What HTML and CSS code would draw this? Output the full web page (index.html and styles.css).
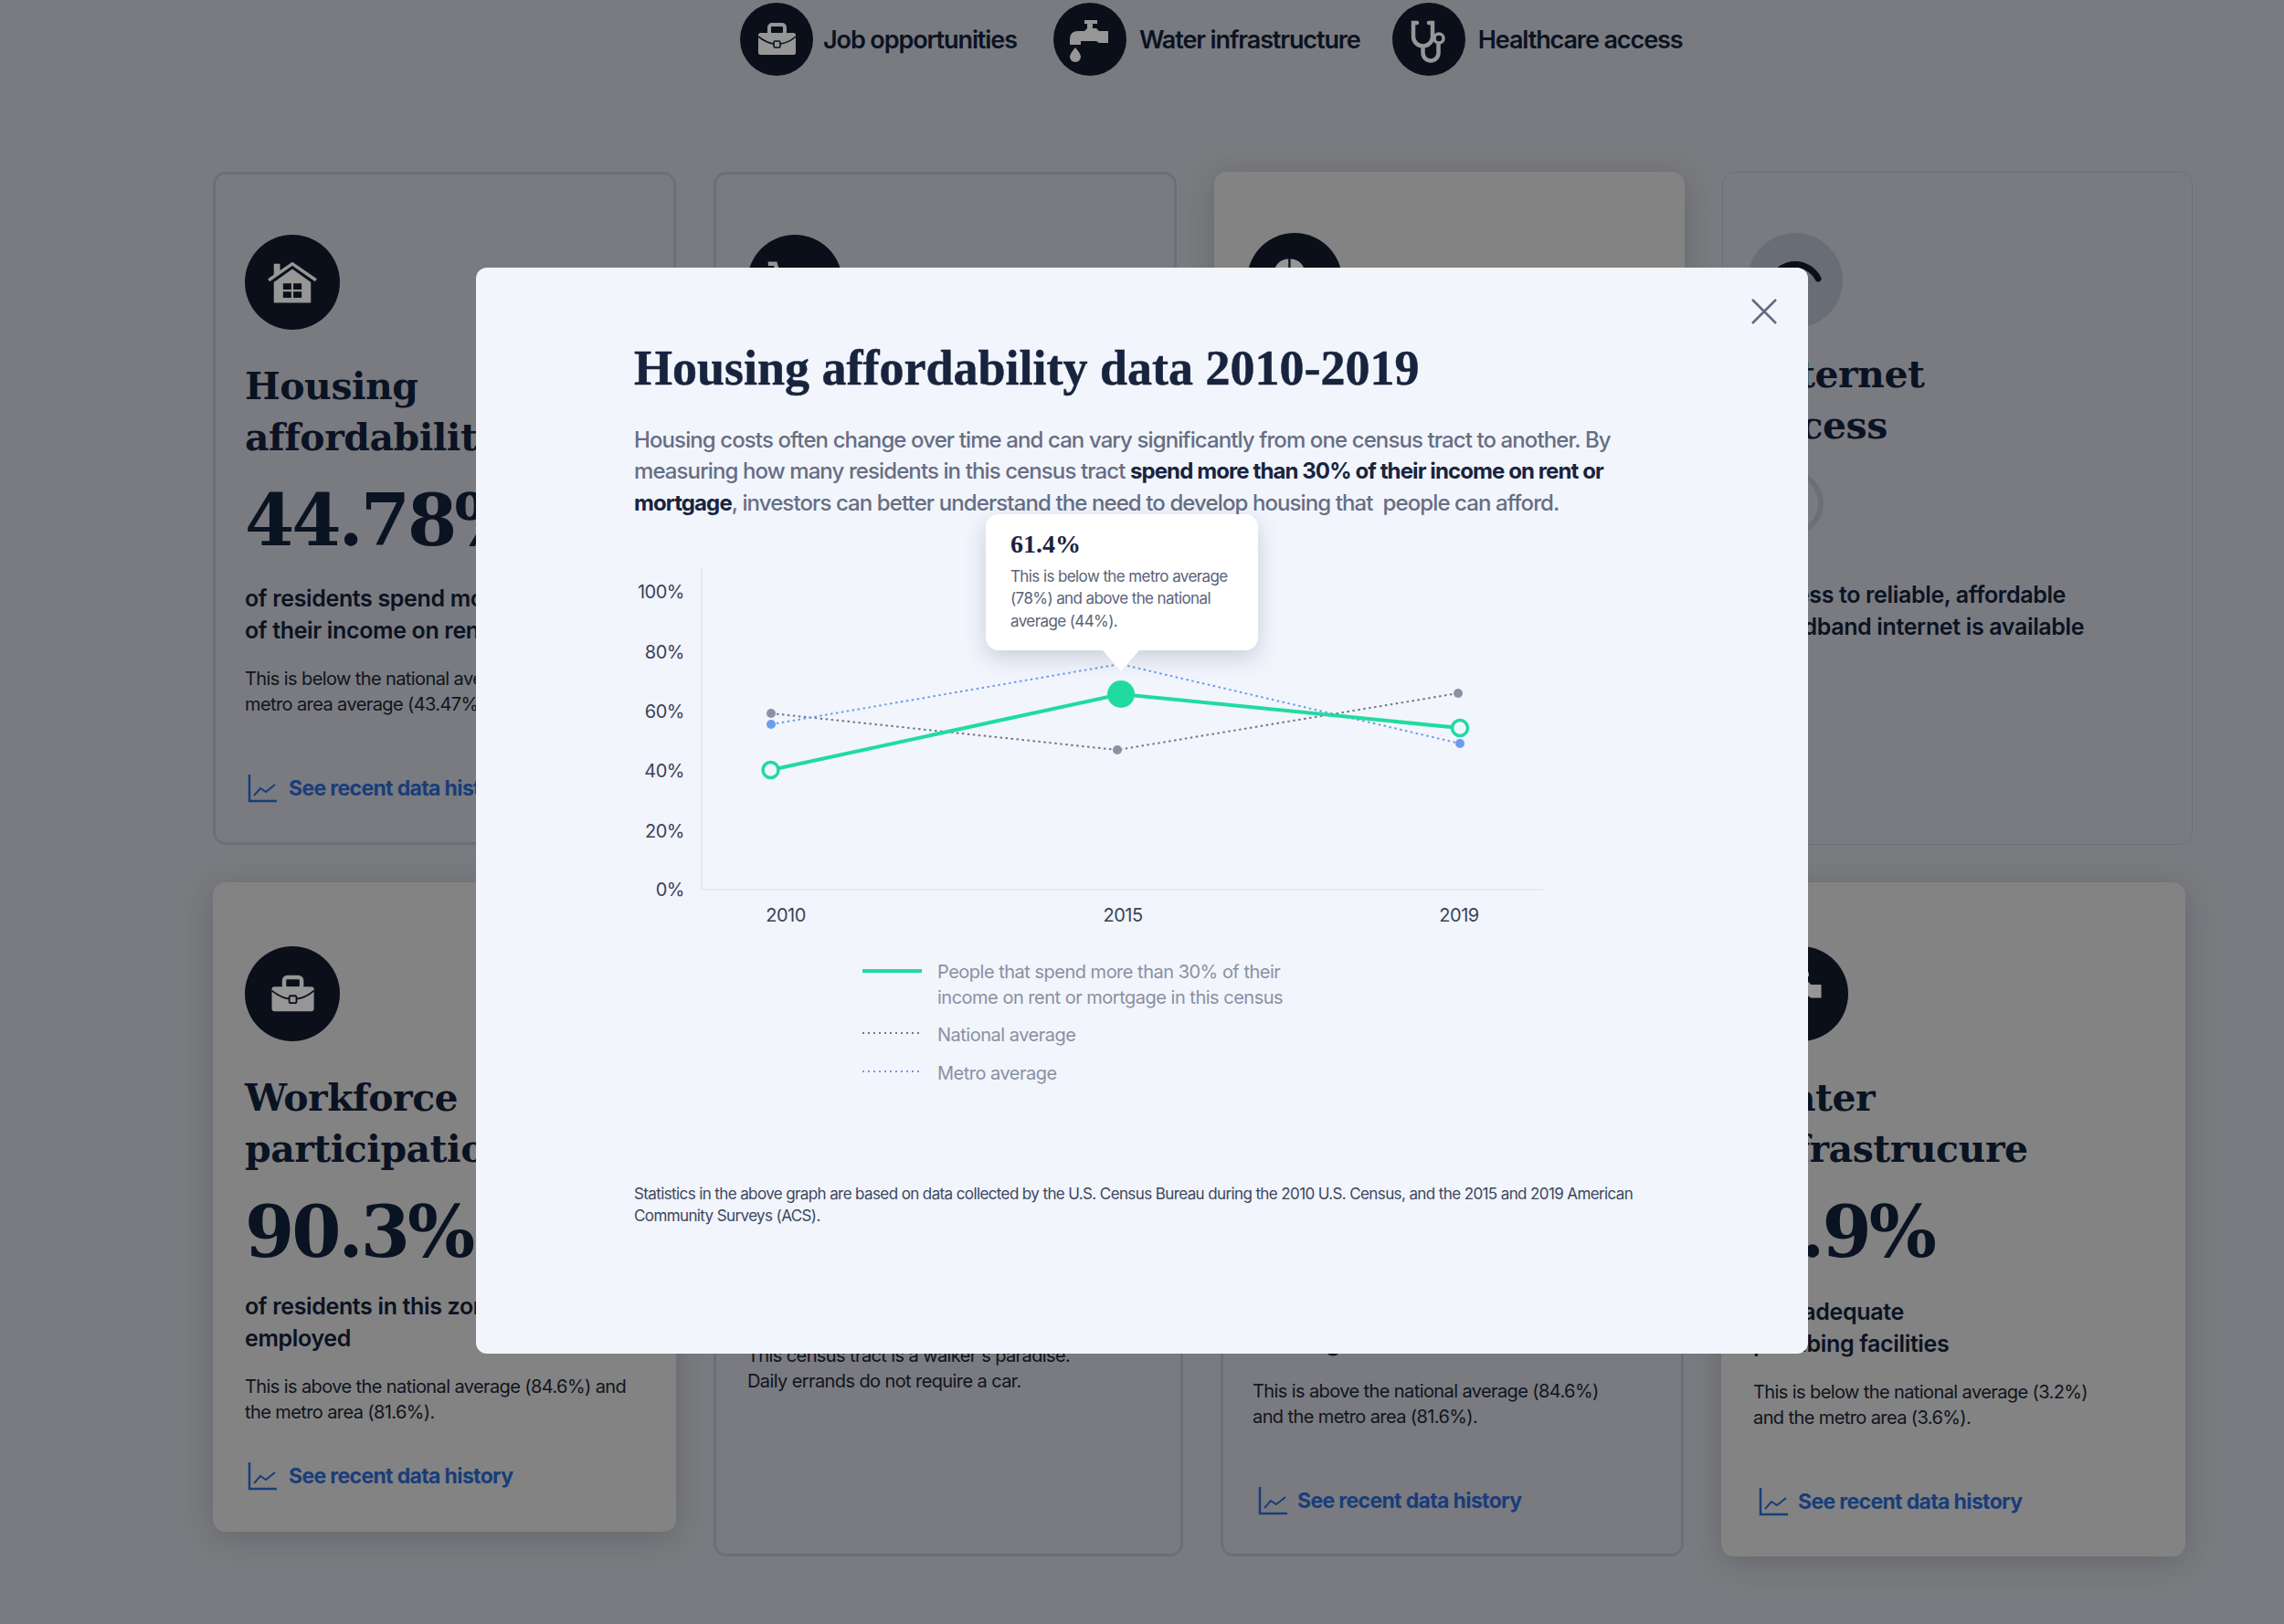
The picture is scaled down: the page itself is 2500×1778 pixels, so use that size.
FILE: index.html
```html
<!DOCTYPE html>
<html lang="en">
<head>
    <meta charset="UTF-8">
    <title>Housing affordability data</title>
    <link rel="stylesheet" href="styles.css">
</head>
<body>
    <svg class="defs" width="0" height="0">
        <symbol id="i-case" viewBox="0 0 80 80">
            <rect x="32" y="24" width="17" height="11" rx="3" fill="none" stroke="currentColor" stroke-width="4"/>
            <rect x="20" y="33" width="41" height="24" rx="2.5" fill="currentColor"/>
            <path d="M20 37q9 7 17 8M44 45q9-1 17-8" fill="none" stroke="#111a2c" stroke-width="1.6"/>
            <rect x="37" y="42" width="7" height="7" rx="1.5" fill="none" stroke="#111a2c" stroke-width="1.6"/>
        </symbol>
        <symbol id="i-tap" viewBox="0 0 80 80">
            <path d="M34 19h14v4h-5v5h4l3 3h10v13H50l-3-2H30v4H18V40q0-9 9-9h7l3-3v-5h-3z" fill="currentColor"/>
            <path d="M24 49q6 7 6 10a6 6 0 0 1-12 0q0-3 6-10z" fill="currentColor"/>
        </symbol>
        <symbol id="i-steth" viewBox="0 0 80 80">
            <path d="M27 22h-4v15a10.500 10.500 0 0 0 21 0V22h-4M33.500 48v7a8.500 8.500 0 0 0 17 0v-9" fill="none" stroke="currentColor" stroke-width="4.500" stroke-linecap="round"/>
            <circle cx="51" cy="39" r="5" fill="none" stroke="currentColor" stroke-width="3.500"/>
        </symbol>
        <symbol id="i-house" viewBox="0 0 80 80">
            <path d="M22 22h6v8l-6 4z" fill="currentColor"/>
            <path d="M17 38l23-16 23 16" fill="none" stroke="currentColor" stroke-width="3"/>
            <path d="M22 40l18-13 18 13v20H22z" fill="currentColor"/>
            <path d="M31 41h8v6h-8zM41 41h8v6h-8zM31 49h8v6h-8zM41 49h8v6h-8z" fill="#111a2c"/>
        </symbol>
        <symbol id="i-cart" viewBox="0 0 80 80">
            <path d="M14 22h7l8 26h28l6-20H26" fill="none" stroke="currentColor" stroke-width="4"/>
            <circle cx="34" cy="57" r="4" fill="currentColor"/>
            <circle cx="54" cy="57" r="4" fill="currentColor"/>
        </symbol>
        <symbol id="i-pie" viewBox="0 0 80 80">
            <path d="M34 19a14 14 0 0 0-14 14h14z" fill="currentColor"/>
            <path d="M36 19a14 14 0 0 1 14 14H36z" fill="currentColor"/>
            <path d="M20 35a14 14 0 0 0 30 0z" fill="currentColor"/>
        </symbol>
        <symbol id="i-trend" viewBox="0 0 32 32">
            <path d="M2 1v29h30" fill="none" stroke="currentColor" stroke-width="2.500"/>
            <path d="M7 24l7-8 6 4 10-8" fill="none" stroke="currentColor" stroke-width="2"/>
        </symbol>
    </svg>

    <div class="page">
        <div class="topics">
            <div class="topic">
                <span class="badge"><svg><use href="#i-case"/></svg></span>
                <span>Job opportunities</span>
            </div>
            <div class="topic">
                <span class="badge"><svg><use href="#i-tap"/></svg></span>
                <span>Water infrastructure</span>
            </div>
            <div class="topic">
                <span class="badge"><svg><use href="#i-steth"/></svg></span>
                <span>Healthcare access</span>
            </div>
        </div>

        <div class="row row-one">
            <div class="card outlined w507">
                <span class="circle"><svg><use href="#i-house"/></svg></span>
                <h2>Housing<br>affordability</h2>
                <div class="stat">44.78%</div>
                <h3>of residents spend more than 30%<br>of their income on rent</h3>
                <p>This is below the national average (44%) and the<br>metro area average (43.47%).</p>
                <a class="history"><svg><use href="#i-trend"/></svg>See recent data history</a>
            </div>
            <div class="card outlined inset w507">
                <span class="circle"><svg><use href="#i-cart"/></svg></span>
            </div>
            <div class="card filled w515">
                <span class="circle up"><svg><use href="#i-pie"/></svg></span>
            </div>
            <div class="card outlined thin w515">
                <span class="circle faded">
                    <svg viewBox="0 0 104 104"><path d="M27 50A28 28 0 0 1 77 50" fill="none" stroke="#111a2c" stroke-width="7" stroke-linecap="round"/></svg>
                </span>
                <h2 class="tight">Internet<br>access</h2>
                <div class="ring"></div>
                <h3 class="after-ring">Access to reliable, affordable<br>broadband internet is available</h3>
            </div>
        </div>

        <div class="row">
            <div class="card filled w507 short">
                <span class="circle"><svg><use href="#i-case"/></svg></span>
                <h2>Workforce<br>participation</h2>
                <div class="stat">90.3%</div>
                <h3>of residents in this zone are<br>employed</h3>
                <p>This is above the national average (84.6%) and<br>the metro area (81.6%).</p>
                <a class="history near"><svg><use href="#i-trend"/></svg>See recent data history</a>
            </div>
            <div class="card outlined inset w514 tall">
                <span class="circle"><svg><use href="#i-cart"/></svg></span>
                <h2>Walkable<br>community</h2>
                <div class="stat">91</div>
                <h3>walk score for this census tract</h3>
                <p>This census tract is a walker's paradise.<br>Daily errands do not require a car.</p>
            </div>
            <div class="card outlined w507 tall">
                <span class="circle"><svg><use href="#i-steth"/></svg></span>
                <h2>Health<br>coverage</h2>
                <div class="stat">90.3%</div>
                <h3>of residents have health<br>coverage</h3>
                <p>This is above the national average (84.6%)<br>and the metro area (81.6%).</p>
                <a class="history"><svg><use href="#i-trend"/></svg>See recent data history</a>
            </div>
            <div class="card filled w508 tall">
                <span class="circle"><svg><use href="#i-tap"/></svg></span>
                <h2>Water<br>infrastrucure</h2>
                <div class="stat">2.9%</div>
                <h3>lack adequate<br>plumbing facilities</h3>
                <p>This is below the national average (3.2%)<br>and the metro area (3.6%).</p>
                <a class="history"><svg><use href="#i-trend"/></svg>See recent data history</a>
            </div>
        </div>
    </div>

    <div class="overlay">
        <div class="modal">
            <svg class="close" viewBox="0 0 28 28"><path d="M1 1l26 26M27 1L1 27" fill="none" stroke="#626b7e" stroke-width="2.500"/></svg>
            <h1>Housing affordability data 2010-2019</h1>
            <p class="intro">Housing costs often change over time and can vary significantly from one census tract to another. By measuring how many residents in this census tract <strong>spend more than 30% of their income on rent or mortgage</strong>, investors can better understand the need to develop housing that&nbsp; people can afford.</p>

            <div class="chart">
                <svg class="plot" viewBox="0 0 1000 410" width="1000" height="410">
                    <path d="M74 12V365H995" fill="none" stroke="#e6eaf3" stroke-width="2"/>
                    <text class="tick" x="55" y="46" text-anchor="end">100%</text>
                    <text class="tick" x="55" y="112" text-anchor="end">80%</text>
                    <text class="tick" x="55" y="177" text-anchor="end">60%</text>
                    <text class="tick" x="55" y="242" text-anchor="end">40%</text>
                    <text class="tick" x="55" y="308" text-anchor="end">20%</text>
                    <text class="tick" x="55" y="372" text-anchor="end">0%</text>
                    <text class="tick" x="166" y="400" text-anchor="middle">2010</text>
                    <text class="tick" x="535" y="400" text-anchor="middle">2015</text>
                    <text class="tick" x="903" y="400" text-anchor="middle">2019</text>

                    <polyline points="150,172 529,212 902,150" fill="none" stroke="#6f778b" stroke-width="2" stroke-dasharray="2.500 3.500"/>
                    <circle cx="150" cy="172" r="5" fill="#8a92a6"/>
                    <circle cx="529" cy="212" r="5" fill="#8a92a6"/>
                    <circle cx="902" cy="150" r="5" fill="#8a92a6"/>

                    <polyline points="150,184 532,118 904,205" fill="none" stroke="#6c9ced" stroke-width="2" stroke-dasharray="2.500 3.500"/>
                    <circle cx="150" cy="184" r="5" fill="#6c9ced"/>
                    <circle cx="904" cy="205" r="5" fill="#6c9ced"/>

                    <polyline points="149.500,234 533,151 904,188" fill="none" stroke="#1fdc9e" stroke-width="4"/>
                    <circle cx="149.500" cy="234" r="8.500" fill="#f2f5fc" stroke="#1fdc9e" stroke-width="3.500"/>
                    <circle cx="533" cy="151" r="15" fill="#1fdc9e"/>
                    <circle cx="904" cy="188" r="8.500" fill="#f2f5fc" stroke="#1fdc9e" stroke-width="3.500"/>
                </svg>
                <div class="tip">
                    <b>61.4%</b>
                    <span>This is below the metro average (78%) and above the national average (44%).</span>
                </div>
            </div>

            <ul class="legend">
                <li><i class="key solid"></i><span>People that spend more than 30% of their<br>income on rent or mortgage in this census</span></li>
                <li><i class="key dots-gray"></i><span>National average</span></li>
                <li><i class="key dots-blue"></i><span>Metro average</span></li>
            </ul>

            <p class="note">Statistics in the above graph are based on data collected by the U.S. Census Bureau during the 2010 U.S. Census, and the 2015 and 2019 American Community Surveys (ACS).</p>
        </div>
    </div>
</body>
</html>
```

FILE: styles.css
```css
body {
    margin: 0;
    background: #cbced5;
    color: #12203a;
    font-family: Inter, "Liberation Sans", sans-serif;
}
.defs {
    position: absolute;
}
.page {
    height: 1778px;
    overflow: hidden;
    box-sizing: border-box;
    padding: 3px 0 0 233px;
}

/* top strip */
.topics {
    display: flex;
    gap: 35px;
    margin-left: 577px;
    height: 185px;
}
.topic {
    display: flex;
    align-items: center;
    gap: 14px;
    height: 80px;
    font-size: 27px;
    font-weight: 600;
    letter-spacing: -1.100px;
}
.topic:first-child {
    gap: 11px;
    margin-right: 5px;
}
.badge {
    width: 80px;
    height: 80px;
    border-radius: 50%;
    background: #111a2c;
    color: #fbfbfb;
}
.badge svg {
    width: 80px;
    height: 80px;
    display: block;
}

/* cards */
.row {
    display: flex;
    align-items: flex-start;
    gap: 41px;
}
.row-one {
    margin-bottom: 41px;
}
.card {
    box-sizing: border-box;
    height: 737px;
    padding: 70px 35px 0;
    border-radius: 14px;
    overflow: hidden;
}
.w507 { width: 507px; }
.w508 { width: 508px; }
.w514 { width: 514px; }
.w515 { width: 515px; }
.short { height: 711px; }
.tall { height: 738px; }
.outlined {
    border: 3px solid #b4bac6;
    padding: 66px 32px 0;
}
.inset {
    padding-left: 34px;
}
.thin {
    border-width: 1px;
    padding-left: 34px;
}
.filled {
    background: #dadada;
    box-shadow: 0 6px 36px rgba(40, 45, 60, 0.22);
}
.circle {
    display: flex;
    align-items: center;
    justify-content: center;
    width: 104px;
    height: 104px;
    border-radius: 50%;
    background: #111a2c;
    color: #fbfbfb;
}
.circle svg {
    width: 90px;
    height: 90px;
}
.up {
    margin: -3px 0 0 1px;
}
.faded {
    background: #afb6c4;
    margin-left: -7px;
}
.faded svg {
    width: 104px;
    height: 104px;
}
.card h2 {
    margin: 34px 0 0;
    font: bold 41px/56px "DejaVu Serif", serif;
    letter-spacing: -0.500px;
}
.card .tight {
    margin-top: 23px;
}
.stat {
    margin-top: 13px;
    font: bold 78px/100px "DejaVu Serif", serif;
    letter-spacing: -3px;
    white-space: nowrap;
}
.card h3 {
    margin: 18px 0 0;
    font-size: 25px;
    line-height: 35px;
    font-weight: 600;
    letter-spacing: -0.350px;
    white-space: nowrap;
}
.short h3 {
    margin-top: 14px;
}
.tall h3 {
    margin-top: 19.500px;
}
.inset h3 {
    margin-top: 15px;
}
.card .after-ring {
    margin-top: 47px;
}
.card p {
    margin: 20.500px 0 0;
    font-size: 20px;
    line-height: 28px;
    color: #1c2433;
    letter-spacing: -0.600px;
    white-space: nowrap;
}
.tall p {
    margin-top: 21.500px;
}
.history {
    display: flex;
    align-items: center;
    gap: 13px;
    margin: 62px 0 0 3px;
    font-size: 23px;
    font-weight: 700;
    letter-spacing: -0.650px;
    color: #2a66cc;
}
.tall .history {
    margin-left: 6px;
    gap: 11px;
}
.near {
    margin-top: 40px;
}
.history svg {
    width: 32px;
    height: 32px;
}
.ring {
    width: 60px;
    height: 60px;
    margin: 21px 0 0 4px;
    border: 6px solid #b3b9c5;
    border-radius: 50%;
}

/* modal */
.overlay {
    position: fixed;
    inset: 0;
    padding-bottom: 3px;
    display: flex;
    align-items: center;
    justify-content: center;
    background: rgba(0, 0, 0, 0.4);
}
.modal {
    position: relative;
    box-sizing: border-box;
    width: 1458px;
    height: 1189px;
    padding: 74px 173px 0;
    background: #f2f5fc;
    border-radius: 12px;
}
.close {
    position: absolute;
    top: 34px;
    right: 34px;
    width: 28px;
    height: 28px;
}
.modal h1 {
    margin: 0;
    color: #18243e;
    font: bold 54px/72px "Liberation Serif", serif;
    -webkit-text-stroke: 0.500px #18243e;
}
.intro {
    margin: 25.500px 0 0;
    width: 1090px;
    font-size: 24px;
    line-height: 34.500px;
    font-weight: 500;
    letter-spacing: -0.900px;
    color: #666e84;
}
.intro strong {
    color: #18243e;
    font-weight: 700;
}
.chart {
    position: relative;
    margin-top: 40.500px;
    height: 410px;
}
.plot {
    display: block;
}
.tick {
    font-family: Inter, "Liberation Sans", sans-serif;
    font-size: 20px;
    letter-spacing: -0.500px;
    fill: #3a4358;
}
.tip {
    position: absolute;
    left: 385px;
    top: -46px;
    box-sizing: border-box;
    width: 298px;
    height: 149px;
    padding: 14px 27px;
    background: #fff;
    border-radius: 14px;
    box-shadow: 0 8px 24px rgba(60, 70, 100, 0.22);
}
.tip::after {
    content: "";
    position: absolute;
    left: 128px;
    top: 149px;
    border-left: 20px solid transparent;
    border-right: 20px solid transparent;
    border-top: 23px solid #fff;
}
.tip b {
    display: block;
    font: bold 28px/38px "Liberation Serif", serif;
    color: #18243e;
}
.tip span {
    display: block;
    margin-top: 4px;
    font-size: 17px;
    line-height: 24.500px;
    letter-spacing: -0.600px;
    color: #5a6378;
}
.legend {
    list-style: none;
    margin: 31px 0 0 250px;
    padding: 0;
    font-size: 20px;
    line-height: 28px;
    letter-spacing: -0.500px;
    color: #8a90a3;
}
.legend li {
    display: flex;
    gap: 17px;
    margin-bottom: 13.500px;
}
.key {
    flex: none;
    width: 65px;
    margin-top: 11px;
    height: 2px;
}
.solid {
    height: 4px;
    background: #1fdc9e;
}
.dots-gray {
    background: repeating-linear-gradient(to right, #6f778b 0 2.500px, transparent 2.500px 6px);
}
.dots-blue {
    background: repeating-linear-gradient(to right, #6c9ced 0 2.500px, transparent 2.500px 6px);
}
.note {
    position: absolute;
    left: 173px;
    top: 1002px;
    margin: 0;
    width: 1110px;
    font-size: 17px;
    line-height: 24px;
    letter-spacing: -0.610px;
    color: #3d4760;
}
```
